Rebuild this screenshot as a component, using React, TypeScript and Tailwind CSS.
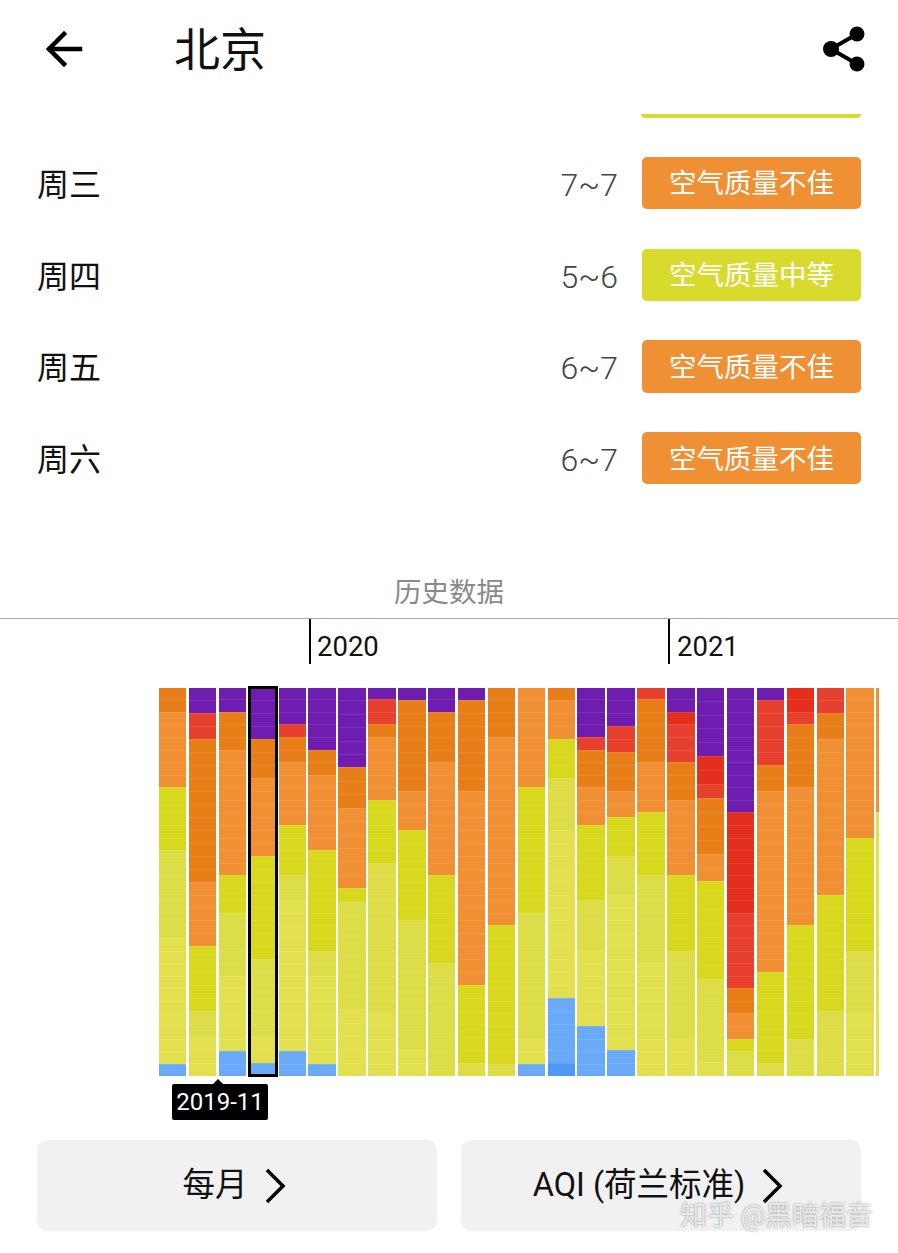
const CJK = "font-['Roboto','Noto_Sans_CJK_SC',sans-serif]";

const P = 'bg-[#6f1cb0]';
const D = 'bg-[#e32f1c]';
const R = 'bg-[#e8402f]';
const O = 'bg-[#e87e18]';
const o = 'bg-[#f08f33]';
const Y = 'bg-[#d8d81f]';
const y = 'bg-[#dddd48]';
const l = 'bg-[#e3e04f]';
const B = 'bg-[#6aa9f8]';
const BB = 'bg-[#4f98f8]';

type Seg = [string, number];

// one column per month, counts are days per level
const months: Seg[][] = [
  [[O, 2], [o, 6], [Y, 5], [y, 7], [l, 10], [B, 1]],
  [[P, 2], [R, 2], [O, 11], [o, 5], [Y, 5], [y, 2], [l, 3]],
  [[P, 2], [O, 3], [o, 10], [Y, 3], [y, 5], [l, 6], [B, 2]],
  [[P, 4], [O, 3], [o, 6], [Y, 8], [y, 6], [l, 2], [B, 1]],
  [[P, 3], [R, 1], [O, 2], [o, 5], [Y, 4], [y, 2], [l, 12], [B, 2]],
  [[P, 5], [O, 2], [o, 6], [Y, 8], [y, 2], [l, 7], [B, 1]],
  [[P, 6], [O, 3], [o, 6], [Y, 1], [y, 8], [l, 5]],
  [[P, 1], [R, 2], [O, 1], [o, 5], [Y, 5], [y, 12], [l, 5]],
  [[P, 1], [O, 7], [o, 3], [Y, 7], [y, 10], [l, 2]],
  [[P, 2], [O, 4], [o, 9], [Y, 7], [y, 9]],
  [[P, 1], [O, 7], [o, 15], [Y, 6], [y, 1]],
  [[O, 4], [o, 15], [Y, 11], [y, 1]],
  [[o, 8], [Y, 10], [y, 10], [l, 2], [B, 1]],
  [[O, 1], [o, 3], [Y, 3], [y, 4], [l, 13], [B, 5], [BB, 1]],
  [[P, 4], [R, 1], [O, 3], [o, 3], [Y, 6], [y, 4], [l, 6], [B, 4]],
  [[P, 3], [R, 2], [O, 3], [o, 2], [Y, 3], [y, 3], [l, 12], [B, 2]],
  [[R, 1], [O, 5], [o, 4], [Y, 5], [y, 7], [l, 9]],
  [[P, 2], [D, 1], [R, 3], [O, 3], [o, 6], [Y, 6], [y, 7], [l, 3]],
  [[P, 5], [D, 2], [R, 1], [O, 4], [o, 2], [Y, 7], [y, 6], [l, 1]],
  [[P, 10], [D, 8], [R, 6], [O, 2], [o, 2], [Y, 1], [y, 2]],
  [[P, 1], [R, 5], [O, 2], [o, 14], [Y, 7], [y, 1]],
  [[D, 2], [R, 1], [O, 5], [o, 11], [Y, 9], [y, 3]],
  [[R, 2], [O, 2], [o, 12], [Y, 9], [y, 5]],
  [[o, 12], [Y, 9], [y, 5], [l, 5]],
  [[o, 10], [l, 21]],
];

const forecast = [
  { day: '周三', range: '7~7', label: '空气质量不佳', color: 'bg-[#f09035]' },
  { day: '周四', range: '5~6', label: '空气质量中等', color: 'bg-[#d9da2e]' },
  { day: '周五', range: '6~7', label: '空气质量不佳', color: 'bg-[#f09035]' },
  { day: '周六', range: '6~7', label: '空气质量不佳', color: 'bg-[#f09035]' },
];

function MonthColumn({ segs, last }: { segs: Seg[]; last: boolean }) {
  const days = segs.flatMap(([color, n]) => Array.from({ length: n }, () => color));
  return (
    <div className={`flex h-full flex-col ${last ? 'w-[3px]' : 'w-[27.4px]'}`}>
      {days.map((color, i) => (
        <div key={i} className={`flex-1 ${color} ${i > 0 ? 'border-t border-white/10' : ''}`} />
      ))}
    </div>
  );
}

function Chevron() {
  return (
    <svg width="22" height="36" viewBox="0 0 22 36" fill="none" stroke="#000" strokeWidth="3.5">
      <path d="M2 2l16 16L2 34" />
    </svg>
  );
}

export default function App() {
  return (
    <div className={`relative h-[1253px] w-[898px] overflow-hidden bg-white text-[#111] ${CJK}`}>
      {/* app bar */}
      <div className="flex h-[98px] items-center pl-[44px] pr-[32px]">
        <svg width="40" height="38" viewBox="0 0 40 38" fill="none" stroke="#000" strokeWidth="4.5" strokeLinecap="square">
          <path d="M36 19H6" />
          <path d="M20 4L5 19l15 15" />
        </svg>
        <div className="ml-[90px] pt-[2px] text-[46px] leading-none">北京</div>
        <svg className="ml-auto" width="44" height="48" viewBox="0 0 44 48" fill="#000">
          <path d="M35 9L9 24l26 15" fill="none" stroke="#000" strokeWidth="4" />
          <circle cx="35" cy="9" r="7.5" />
          <circle cx="9" cy="24" r="8" />
          <circle cx="35" cy="39" r="7.5" />
        </svg>
      </div>

      {/* forecast list */}
      <div className="ml-[641px] mt-[16px] h-[4px] w-[220px] rounded-b-[6px] bg-[#d9da2e]" />
      <div className="mt-[39px] flex flex-col gap-[39.5px] pl-[37px] pr-[37px]">
        {forecast.map((row) => (
          <div key={row.day} className="flex h-[52.2px] items-center">
            <div className="pt-[4px] text-[32px] leading-none">{row.day}</div>
            <div className="ml-auto pt-[4px] text-[32px] font-light leading-none text-[#444]">{row.range}</div>
            <div className={`ml-[24px] flex h-full w-[219px] items-center justify-center rounded-[5px] pt-[2px] text-[27.5px] text-white ${row.color}`}>
              {row.label}
            </div>
          </div>
        ))}
      </div>

      {/* history */}
      <div className="mt-[91px] border-b border-[#aaa] pb-[7px] text-center text-[27.5px] leading-[36px] text-[#8a8a8a]">历史数据</div>
      <div className="flex h-[45px] text-[27.5px] leading-none">
        <div className="ml-[309px] flex w-[359px] items-center border-l-[2px] border-black pl-[6px] pt-[9px]">2020</div>
        <div className="flex items-center border-l-[2px] border-black pl-[7px] pt-[9px]">2021</div>
      </div>

      <div className="relative ml-[159px] mt-[23.5px] flex h-[388.5px] gap-[2.5px]">
        {months.map((segs, i) => (
          <MonthColumn key={i} segs={segs} last={i === months.length - 1} />
        ))}
        <div className="absolute -top-[2px] -bottom-[1px] left-[89px] w-[30px] border-[3px] border-black" />
        <div className="absolute left-[13px] top-[396px]">
          <div className="absolute left-[41px] -top-[5px] h-0 w-0 border-x-[5px] border-b-[5px] border-x-transparent border-b-black" />
          <div className="flex h-[36px] w-[96px] items-center justify-center rounded-[2px] bg-black text-[24px] leading-none text-white">2019-11</div>
        </div>
      </div>

      {/* selectors */}
      <div className="mt-[64px] flex gap-[24px] pl-[37px]">
        <div className="flex h-[91px] w-[400px] items-center justify-center gap-[17px] rounded-[10px] bg-[#f1f1f1] pr-[5px] text-[32.5px]">
          <span>每月</span>
          <Chevron />
        </div>
        <div className="flex h-[91px] w-[400px] items-center justify-center gap-[17px] rounded-[10px] bg-[#f1f1f1] pr-[5px] text-[32.5px]">
          <span>AQI (荷兰标准)</span>
          <Chevron />
        </div>
      </div>

      {/* watermark */}
      <div className="absolute left-[680px] top-[1200px] whitespace-nowrap text-[27px] leading-[32px] text-white/80 [text-shadow:0_0_2px_#777]">
        知乎 @黑暗福音
      </div>
    </div>
  );
}
